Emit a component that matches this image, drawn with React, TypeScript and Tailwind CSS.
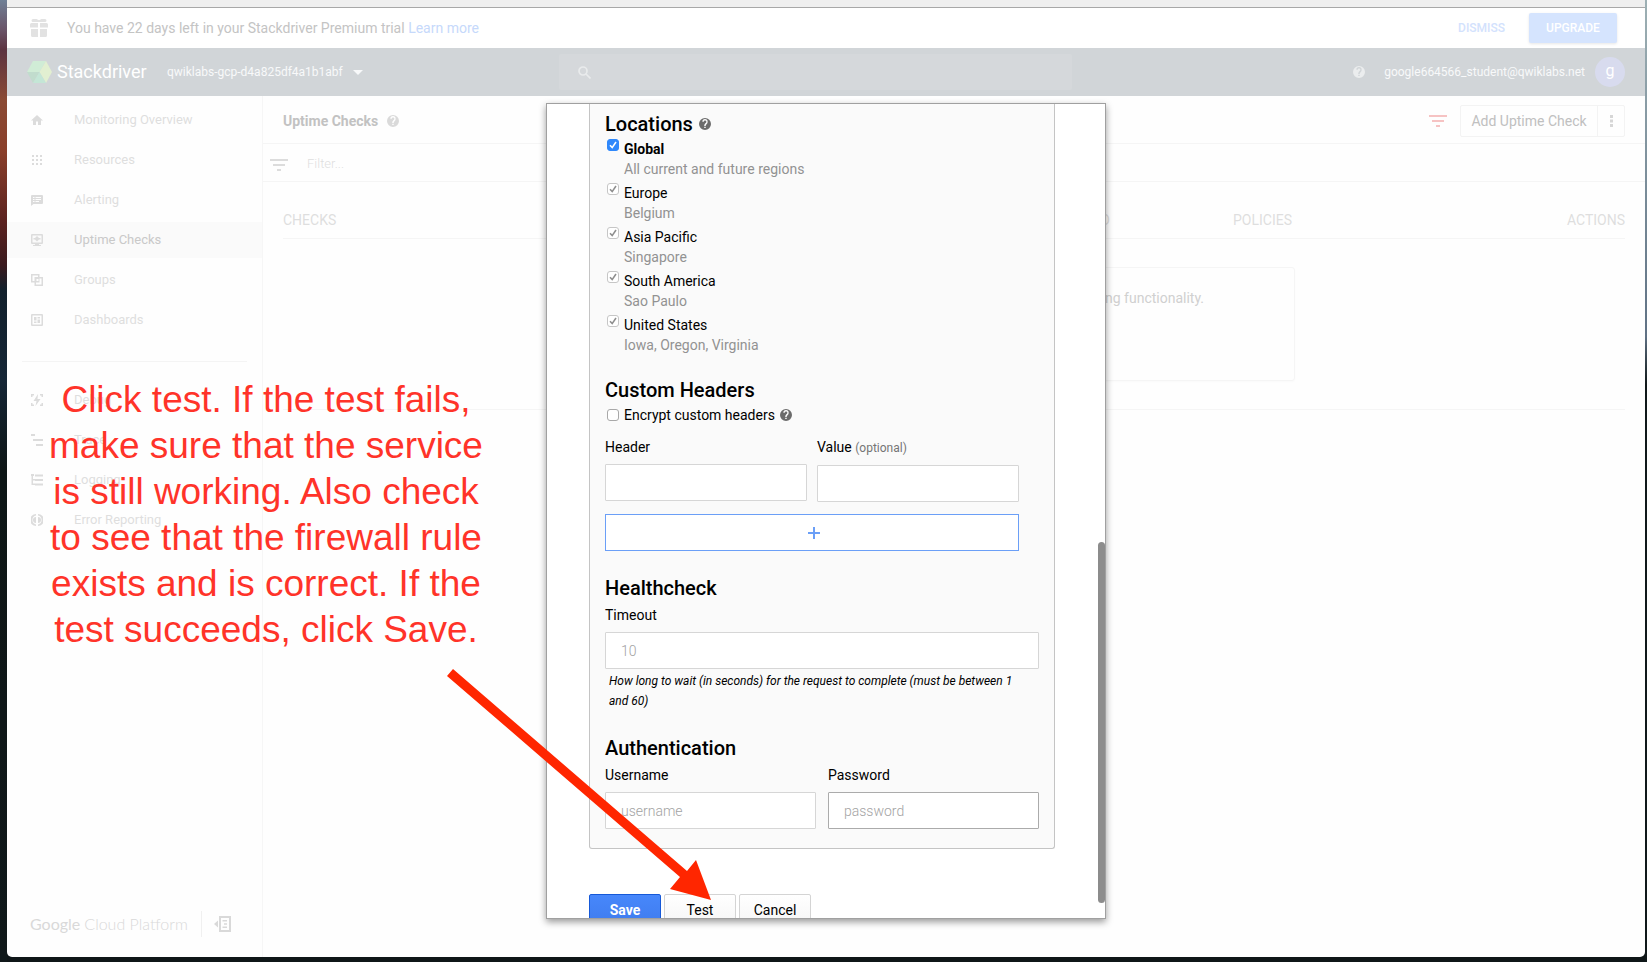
import type { ReactNode } from 'react';

function HelpIcon({ className }: { className: string }) {
  return (
    <svg viewBox="0 0 24 24" className={className} fill="currentColor" aria-hidden="true">
      <path
        fillRule="evenodd"
        d="M12 0a12 12 0 1 0 0 24 12 12 0 0 0 0-24zm1.4 20.2h-2.9v-2.8h2.9zm3-9.2-1.3 1.3c-1 1-1.7 1.9-1.7 3.5h-2.9v-.7c0-1.6.7-3 1.7-4.1l1.7-1.7c.5-.5.8-1.1.8-1.8a2.6 2.6 0 0 0-5.2 0H6.7a5.3 5.3 0 0 1 10.6 0c0 1.4-.4 2.5-.9 3.5z"
      />
    </svg>
  );
}

function FilterIcon({ className }: { className: string }) {
  return (
    <svg viewBox="0 0 18 12" className={className} fill="currentColor" aria-hidden="true">
      <path d="M0 0h18v2H0zM3 5h12v2H3zM7 10h4v2H7z" />
    </svg>
  );
}

const icons: Record<string, ReactNode> = {
  home: <path d="M5 11V7.500h2V11h3V6.500h2L6 1 0 6.500h2V11z" />,
  resources: <path d="M1 1h2v2H1zM5 1h2v2H5zM9 1h2v2H9zM1 5h2v2H1zM5 5h2v2H5zM9 5h2v2H9zM1 9h2v2H1zM5 9h2v2H5zM9 9h2v2H9z" />,
  alerting: (
    <path fillRule="evenodd" d="M1 1h10a1 1 0 0 1 1 1v7a1 1 0 0 1-1 1H2.500L0 12V2a1 1 0 0 1 1-1zm1 2v1h1.500V3zm2.500 0v1H10V3zM2 5v1h1.500V5zm2.500 0v1H10V5zM2 7v1h1.500V7zm2.500 0v1H8V7z" />
  ),
  uptime: (
    <path fillRule="evenodd" d="M1 0h10a1 1 0 0 1 1 1v8a1 1 0 0 1-1 1H8v1h2v1H2v-1h2v-1H1a1 1 0 0 1-1-1V1a1 1 0 0 1 1-1zm.500 1.500v7h9v-7zM6 2l2 2h1.500v1.500H8l-2 2-2-2H2.500V4H4z" />
  ),
  groups: (
    <path fillRule="evenodd" d="M0 0h8.500v3H12v9H3.500V8.500H0zm1.500 1.500V7h2V3h3.500V1.500zM5 4.500v6h5.500v-6H8.500v4H5zM5.500 5h2v2h-2z" />
  ),
  dashboards: (
    <path fillRule="evenodd" d="M1 0h10a1 1 0 0 1 1 1v10a1 1 0 0 1-1 1H1a1 1 0 0 1-1-1V1a1 1 0 0 1 1-1zm.500 1.500v9h9v-9zM3 3h2.500v3.500H3zM6.500 3H9v1.500H6.500zM3 7.500h2.500V9H3zM6.500 5.500H9V9H6.500z" />
  ),
  debug: (
    <path d="M7 0 2.500 7H5.500L4.500 12 9.500 5H6.500zM0 0h3v1.500H1.500V3H0zM9 0h3v3h-1.500V1.500H9zM0 9h1.500v1.500H3V12H0zM10.500 9H12v3H9v-1.500h1.500z" />
  ),
  trace: <path d="M0 0h4v2H0zM2 5h10v2H2zM5 10h7v2H5z" />,
  logging: <path d="M0 0h3v2H2v3h2v1.500H2V9.500h2V11H.500V2H0zM4 .500h8v2H4zM4 5h8v2H4zM4 9.500h8v2H4z" />,
  error: (
    <path fillRule="evenodd" d="M5 0v1.600a4.500 4.500 0 0 0 0 8.800V12A6 6 0 0 1 5 0zM7 0v1.600a4.500 4.500 0 0 1 0 8.800V12A6 6 0 0 0 7 0zM5 3v6a3 3 0 0 1 0-6zM7 3v6a3 3 0 0 0 0-6z" />
  ),
};

function NavItem({ icon, label, active }: { icon: string; label: string; active?: boolean }) {
  return (
    <li>
      <a
        href="#"
        className={
          active
            ? 'flex h-9 items-center gap-[31px] bg-[#fafafa] pl-6 text-[13px] text-[#c9c9c9]'
            : 'flex h-9 items-center gap-[31px] pl-6 text-[13px] text-[#dedede]'
        }
      >
        <svg viewBox="0 0 12 12" className="size-3 shrink-0 text-[#dcdcdc]" fill="currentColor" aria-hidden="true">
          {icons[icon]}
        </svg>
        {label}
      </a>
    </li>
  );
}

function Checkbox({ id, checked, disabled }: { id: string; checked?: boolean; disabled?: boolean }) {
  return (
    <span className="grid size-3 shrink-0">
      <input
        id={id}
        type="checkbox"
        defaultChecked={checked}
        disabled={disabled}
        className="peer col-start-1 row-start-1 size-3 appearance-none rounded-[3px] border border-[#a8a8a8] bg-white checked:border-[#2f88fb] checked:bg-[#2f88fb] disabled:border-[#c6c6c6] disabled:bg-white"
      />
      <svg
        viewBox="0 0 12 12"
        className="pointer-events-none invisible col-start-1 row-start-1 size-3 text-white peer-checked:visible peer-disabled:text-[#8e8e8e]"
        fill="none"
        stroke="currentColor"
        strokeWidth="1.6"
        aria-hidden="true"
      >
        <path d="M3 6.300 5.200 8.600 9 3" />
      </svg>
    </span>
  );
}

const locations = [
  { id: 'global', name: 'Global', detail: 'All current and future regions' },
  { id: 'europe', name: 'Europe', detail: 'Belgium' },
  { id: 'asia', name: 'Asia Pacific', detail: 'Singapore' },
  { id: 'south-america', name: 'South America', detail: 'Sao Paulo' },
  { id: 'us', name: 'United States', detail: 'Iowa, Oregon, Virginia' },
];

const field =
  'h-[37px] w-full rounded-[1px] border border-[#d6d6d6] bg-white px-[15px] text-sm font-light outline-none placeholder:text-[#a3a3a3]';

function UptimeDialog() {
  return (
    <div className="absolute inset-0 flex justify-center pt-[103px] pb-[38px]">
      <div
        role="dialog"
        aria-label="Uptime check settings"
        className="relative flex w-[560px] flex-col overflow-hidden border border-[#a0a0a0] bg-white px-[42px] text-sm text-black shadow-[0_3px_7px_rgba(0,0,0,0.4)]"
      >
        <div className="mr-2 shrink-0 rounded-b-[3px] border border-t-0 border-[#c4c4c4] bg-[#fafafa] px-[15px] pb-[19px]">
          <section className="pt-2">
            <h2 className="flex items-center gap-1.5 text-xl leading-6 font-medium">
              Locations <HelpIcon className="size-3 text-[#6b6b6b]" />
            </h2>
            <ul className="pt-[3px] pl-0.5">
              {locations.map((place, i) => (
                <li key={place.id} className="flex h-11 gap-[5px]">
                  <Checkbox id={place.id} checked disabled={i > 0} />
                  <label htmlFor={place.id} className="flex flex-col leading-5">
                    <span className={i === 0 ? 'font-bold' : ''}>{place.name}</span>
                    <span className="text-[#929292]">{place.detail}</span>
                  </label>
                </li>
              ))}
            </ul>
          </section>

          <section className="pt-[19px]">
            <h2 className="text-xl leading-6 font-medium">Custom Headers</h2>
            <div className="flex items-center gap-[5px] pt-[3px] pl-0.5 leading-5">
              <Checkbox id="encrypt" />
              <label htmlFor="encrypt">Encrypt custom headers</label>
              <HelpIcon className="size-3 text-[#6b6b6b]" />
            </div>
            <div className="mr-5 flex gap-2.5 pt-3">
              <div className="flex-1">
                <label htmlFor="header" className="block pb-[7px] leading-5">
                  Header
                </label>
                <input id="header" className={field} />
              </div>
              <div className="flex-1">
                <label htmlFor="value" className="block pb-2 leading-5">
                  Value <span className="text-xs text-[#757575]">(optional)</span>
                </label>
                <input id="value" className={field} />
              </div>
            </div>
            <div className="mr-5 pt-3">
              <button
                type="button"
                aria-label="Add header"
                className="flex h-[37px] w-full items-center justify-center border border-[#6b9ff7] bg-white pl-1 text-[#6b9ff7]"
              >
                <svg viewBox="0 0 12 12" className="size-3" stroke="currentColor" strokeWidth="2" aria-hidden="true">
                  <path d="M6 0v12M0 6h12" />
                </svg>
              </button>
            </div>
          </section>

          <section className="pt-[25px]">
            <h2 className="text-xl leading-6 font-medium">Healthcheck</h2>
            <label htmlFor="timeout" className="block pt-[5px] pb-[7px] leading-5">
              Timeout
            </label>
            <input id="timeout" placeholder="10" className={field} />
            <p className="pt-0.5 pr-4 pl-1 text-xs leading-5 italic">
              How long to wait (in seconds) for the request to complete (must be between 1 and 60)
            </p>
          </section>

          <section className="pt-[25px]">
            <h2 className="text-xl leading-6 font-medium">Authentication</h2>
            <div className="flex gap-3 pt-[5px]">
              <div className="flex-1">
                <label htmlFor="username" className="block pb-[7px] leading-5">
                  Username
                </label>
                <input id="username" placeholder="username" className={field} />
              </div>
              <div className="flex-1">
                <label htmlFor="password" className="block pb-[7px] leading-5">
                  Password
                </label>
                <input
                  id="password"
                  type="password"
                  placeholder="password"
                  className="h-[37px] w-full rounded-[1px] border border-[#ababab] bg-white px-[15px] text-sm font-light outline-none placeholder:text-[#a3a3a3]"
                />
              </div>
            </div>
          </section>
        </div>
        <div className="flex shrink-0 gap-[3px] pt-[45px]">
          <button
            type="button"
            className="h-8 w-[72px] rounded-[2px] border border-[#1659d8] bg-linear-to-b from-[#4787fb] to-[#3f7cee] font-bold text-white"
          >
            Save
          </button>
          <button type="button" className="h-8 w-[72px] rounded-[2px] border border-[#d4d4d4] bg-linear-to-b from-white to-[#f6f6f6]">
            Test
          </button>
          <button type="button" className="h-8 w-[72px] rounded-[2px] border border-[#d4d4d4] bg-linear-to-b from-white to-[#f6f6f6]">
            Cancel
          </button>
        </div>
        <div className="absolute right-0 bottom-[15px] h-[361px] w-[7px] rounded-full bg-[#8c8c8c]" />
      </div>
    </div>
  );
}

function Annotation() {
  return (
    <>
      <p className="absolute top-[377px] left-[29px] w-[460px] text-center font-['Liberation_Sans',Arial,sans-serif] text-[37px] leading-[46px] text-[#ff3329]">
        Click test. If the test fails,
        <br />
        make sure that the service
        <br />
        is still working. Also check
        <br />
        to see that the firewall rule
        <br />
        exists and is correct. If the
        <br />
        test succeeds, click Save.
      </p>
      <svg viewBox="0 0 270 234" className="absolute top-[668px] left-[438px] h-[234px] w-[270px]" aria-hidden="true">
        <path d="M8 1 242 203 251 192 266 232 225 221 235 209 2 8z" fill="#ff2600" />
      </svg>
    </>
  );
}

export default function App() {
  return (
    <div className="flex min-h-screen bg-[#0f1618] font-[Roboto,sans-serif]">
      <div className="w-[7px] shrink-0 bg-[linear-gradient(#6f8096_0,#6a5468_30px,#5c3340_50px,#8a4a34_100px,#8a3f2a_150px,#5c2320_220px,#3a1a1e_265px,#12202c_290px,#152636_380px,#0e1616_470px,#10181a_100%)]" />
      <div className="relative mb-[5px] flex min-w-0 flex-1 flex-col overflow-hidden rounded-b-[5px] bg-[#fefefe]">
        <div className="h-2 shrink-0 border-b border-[#a8a8a8] bg-[#efefef]" />

        <div className="flex h-10 shrink-0 items-center bg-white pr-7 pl-[23px] text-sm text-[#c4c4c4]">
          <svg viewBox="0 0 18 18" className="size-[18px] text-[#e2e2e2]" fill="currentColor" aria-hidden="true">
            <path d="M3 0h3.500L9 1.200 11.500 0H15a1.500 1.500 0 0 1 0 3H3a1.500 1.500 0 0 1 0-3zM1.500 4H8v4.500H0V5.500A1.500 1.500 0 0 1 1.500 4zM10 4h6.500A1.500 1.500 0 0 1 18 5.500v3h-8zM1 10h7v8H2.500A1.500 1.500 0 0 1 1 16.500zM10 10h7v6.500a1.500 1.500 0 0 1-1.500 1.500H10z" />
          </svg>
          <p className="pl-[19px]">
            You have 22 days left in your Stackdriver Premium trial{' '}
            <a href="#" className="text-[#c6d9fb]">
              Learn more
            </a>
          </p>
          <button type="button" className="mr-6 ml-auto text-xs font-medium text-[#d3e2fd]">
            DISMISS
          </button>
          <button
            type="button"
            className="h-[30px] w-[88px] rounded-[2px] bg-[#d5e4fe] text-xs font-medium text-white shadow-[0_1px_3px_rgba(0,0,0,0.1)]"
          >
            UPGRADE
          </button>
        </div>

        <header className="flex h-12 shrink-0 items-center bg-[#d1d5d8] pr-5 pl-5 text-xs text-[#f8f9fa]">
          <svg viewBox="0 0 25 22" className="h-[22px] w-[25px]" aria-hidden="true">
            <path d="M0 11 6 0h13l-6.500 11z" fill="#d0ecd6" />
            <path d="M19 0l6 11-6 11-6.500-11z" fill="#e2efd1" />
            <path d="M0 11h12.500L6 22z" fill="#c1dccd" />
            <path d="M12.500 11 19 22H6z" fill="#c4e6d6" />
          </svg>
          <span className="w-[115px] pl-[5px] text-lg text-white">Stackdriver</span>
          <button type="button" className="flex w-[203px] items-center gap-2.5 whitespace-nowrap">
            qwiklabs-gcp-d4a825df4a1b1abf
            <svg viewBox="0 0 10 5" className="h-[5px] w-2.5" fill="currentColor" aria-hidden="true">
              <path d="M0 0h10L5 5z" />
            </svg>
          </button>
          <div className="mr-auto ml-[189px] flex h-9 w-[513px] items-center gap-2.5 rounded-[2px] bg-[#d5d8db] pl-[19px]">
            <svg viewBox="0 0 13 13" className="size-[13px] text-[#e9ebec]" fill="none" stroke="currentColor" strokeWidth="1.7" aria-hidden="true">
              <circle cx="5" cy="5" r="4" />
              <path d="m8 8 4.500 4.500" />
            </svg>
            <input aria-label="Search" className="min-w-0 flex-1 outline-none" />
          </div>
          <HelpIcon className="mr-[19px] size-3 text-[#ebedee]" />
          <span>google664566_student@qwiklabs.net</span>
          <span className="ml-2.5 flex size-[30px] items-center justify-center rounded-full bg-[#d8dbee] pb-0.5 text-base text-white">g</span>
        </header>

        <div className="flex flex-1">
          <nav className="flex w-64 shrink-0 flex-col border-r border-[#f6f6f6] pt-1.5">
            <ul className="flex flex-col gap-1">
              <NavItem icon="home" label="Monitoring Overview" />
              <NavItem icon="resources" label="Resources" />
              <NavItem icon="alerting" label="Alerting" />
              <NavItem icon="uptime" label="Uptime Checks" active />
              <NavItem icon="groups" label="Groups" />
              <NavItem icon="dashboards" label="Dashboards" />
            </ul>
            <hr className="mx-[15px] mt-[23px] mb-5 border-[#f4f4f4]" />
            <ul className="flex flex-col gap-1">
              <NavItem icon="debug" label="Debug" />
              <NavItem icon="trace" label="Trace" />
              <NavItem icon="logging" label="Logging" />
              <NavItem icon="error" label="Error Reporting" />
            </ul>
            <div className="mt-auto mb-5 flex items-center pl-[23px] text-[#d9d9d9]">
              <span className="w-[171px] font-[Lato,sans-serif] text-base whitespace-nowrap">
                Google <span className="font-light">Cloud Platform</span>
              </span>
              <span className="h-[26px] w-px bg-[#f0f0f0]" />
              <button type="button" aria-label="Collapse menu" className="ml-3">
                <svg viewBox="0 0 17 16" className="h-4 w-[17px]" fill="currentColor" aria-hidden="true">
                  <path fillRule="evenodd" d="M0 8l4-3.500v7zM5 0h12v16H5zm2 2v12h8V2zM8.500 4H13v1.500H8.500zM10 7.200h3v1.500h-3zM8.500 10.500H13V12H8.500z" />
                </svg>
              </button>
            </div>
          </nav>

          <main className="min-w-0 flex-1 text-sm">
            <div className="flex h-12 items-center border-b border-[#f5f5f5] pt-0.5 pr-5 pl-5">
              <h1 className="font-bold text-[#c2c2c2]">Uptime Checks</h1>
              <HelpIcon className="ml-[9px] size-3 text-[#dadada]" />
              <FilterIcon className="mr-[13px] ml-auto h-3 w-[18px] text-[#f6c3c3]" />
              <div className="flex h-8 rounded-[2px] border border-[#f3f3f3] text-[#c0c0c0]">
                <button type="button" className="w-[137px] border-r border-[#f3f3f3]">
                  Add Uptime Check
                </button>
                <button type="button" aria-label="More options" className="flex w-[26px] items-center justify-center">
                  <svg viewBox="0 0 3 12" className="h-3 w-[3px] text-[#d6d6d6]" fill="currentColor" aria-hidden="true">
                    <path d="M0 0h3v3H0zM0 4.500h3v3H0zM0 9h3v3H0z" />
                  </svg>
                </button>
              </div>
            </div>
            <div className="flex h-[38px] items-center gap-[19px] border-b border-[#f5f5f5] pt-1 pl-[7px]">
              <FilterIcon className="h-3 w-[18px] text-[#dcdcdc]" />
              <input aria-label="Filter" placeholder="Filter..." className="flex-1 text-[13px] font-light outline-none placeholder:text-[#dedede]" />
            </div>
            <div className="px-5 pt-5">
              <table className="w-full table-fixed border-separate border-spacing-0">
                <thead>
                  <tr className="text-sm text-[#dedede]">
                    <th className="h-[37px] w-1/2 border-b border-[#f5f5f5] text-left font-normal">CHECKS</th>
                    <th className="w-[156px] border-b border-[#f5f5f5] text-right font-normal">D</th>
                    <th className="border-b border-[#f5f5f5] pl-[123px] text-left font-normal">POLICIES</th>
                    <th className="border-b border-[#f5f5f5] text-right font-normal">ACTIONS</th>
                  </tr>
                </thead>
                <tbody>
                  <tr>
                    <td colSpan={4} className="border-b border-[#f5f5f5] py-7">
                      <div className="mx-auto h-[114px] max-w-[682px] rounded-[3px] border border-[#f5f5f5] pt-5 pr-[90px] text-right text-[#d0d0d0] shadow-[0_1px_2px_rgba(0,0,0,0.02)]">
                        ng functionality.
                      </div>
                    </td>
                  </tr>
                </tbody>
              </table>
            </div>
          </main>
        </div>

        <UptimeDialog />
        <Annotation />
      </div>
      <div className="w-[2px] shrink-0 bg-linear-to-b from-[#9db0b4] via-[#5f7184] via-35% to-[#10181a] to-40%" />
    </div>
  );
}
